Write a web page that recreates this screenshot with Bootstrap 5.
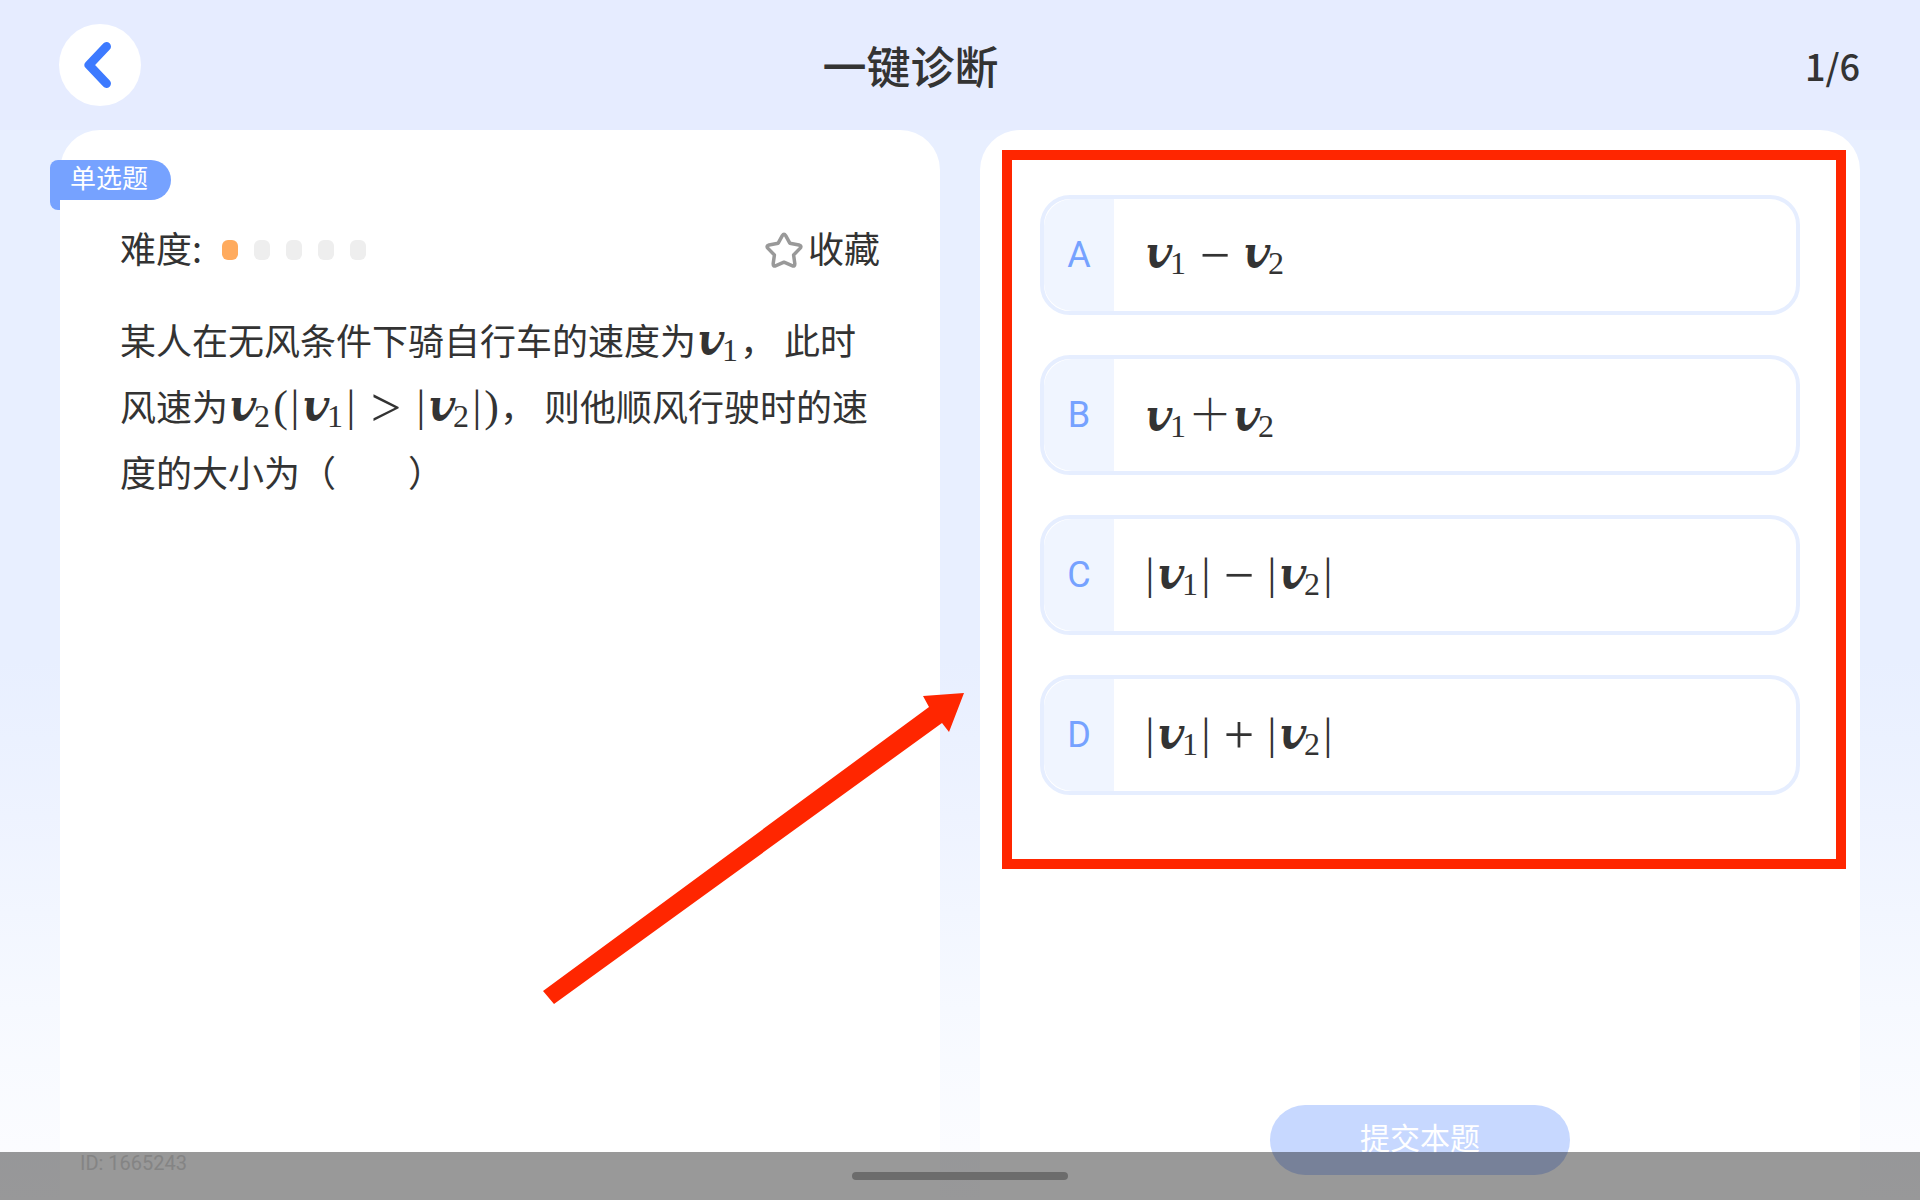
<!DOCTYPE html>
<html lang="zh-CN">
<head>
<meta charset="utf-8">
<meta name="viewport" content="width=device-width, initial-scale=1">
<title>一键诊断</title>
<link rel="stylesheet" href="https://cdn.jsdelivr.net/npm/bootstrap@5.3.0/dist/css/bootstrap.min.css">
<style>
  body { font-family: "Noto Sans CJK SC", sans-serif; color: #333; background: linear-gradient(#e8efff 55%, #eef3ff 68%, #f6f9ff 84%, #fdfdff 100%); }
  .top-bar { height: 130px; padding: 0 60px 0 59px; background: #e6ecff; }
  .back-btn { width: 82px; height: 82px; background: #fff; }
  .page-title { font-size: 44px; line-height: 64px; font-weight: 500; }
  .page-count { width: 180px; font-size: 36px; line-height: 64px; font-weight: 500; }
  .panes { padding: 0 60px; gap: 40px; }
  .pane { flex: 1 1 0; min-width: 0; border-radius: 40px 40px 0 0; background: #fff; }
  .question-pane { padding: 84px 60px 25px; }
  .kind-tag { left: -10px; top: 30px; width: 121px; height: 40px; padding-left: 20px; font-size: 26px; line-height: 34px; color: #fff; background: #76a2ff; border-radius: 8px 20px 20px 0; }
  .kind-tag::after { content: ""; position: absolute; left: 0; top: 40px; width: 10px; height: 10px; background: #76a2ff; border-radius: 0 0 0 8px; }
  .body-text { font-size: 36px; line-height: 66px; }
  .level-dots { gap: 16px; margin-left: 20px; padding-top: 6px; }
  .level-dots i { width: 16px; height: 20px; border-radius: 6px; background: #eee; }
  .level-dots i.on { background: #ffab5e; }
  .fav-btn { color: inherit; gap: 5px; }
  .fav-btn svg { margin-top: 6px; }
  .question { margin-top: 26px; }
  .question-id { margin-left: -40px; font: 20px/24px Roboto, sans-serif; color: #ddd; }
  .answer-pane { padding: 65px 60px 25px; }
  .choices { gap: 40px; }
  .choice { height: 120px; border: 4px solid #e6eeff; border-radius: 30px; overflow: hidden; cursor: pointer; }
  .choice-key { width: 70px; margin-right: 30px; background: #f0f5ff; color: #76a2ff; font: 36px/40px Roboto, sans-serif; border-radius: 28px 0 0 28px; }
  .highlight-box { inset: -45px -46px -74px -38px; border: 10px solid #ff2600; pointer-events: none; }
  .submit-btn { width: 300px; height: 70px; padding: 0 0 8px; font-size: 30px; line-height: 40px; color: #fff; background: #c7d8ff; }
  .submit-btn:hover { color: #fff; background: #b6ccff; }

  /* formulas: one cell per symbol */
  .fm { display: inline-flex; align-items: baseline; font: 44px/56px "Liberation Serif", serif; white-space: nowrap; }
  .fm > * { text-align: center; }
  .fm b { width: 26px; font-family: "DejaVu Math TeX Gyre", "Liberation Serif", serif; font-weight: 400; line-height: 56px; text-align: left; }
  .fm sub { width: 18px; font-size: 32px; line-height: 32px; bottom: 0; top: 6px; text-align: left; }
  .fm .bar { width: 12px; }
  .fm .par { width: 17px; }
  .fm .rel, .fm .op { align-self: center; font-size: 54px; line-height: 56px; }
  .fm .rel { width: 58px; }
  .fm .op { width: 54px; }
  .fm .wide { width: 44px; font-family: "Noto Sans CJK SC", sans-serif; font-weight: 300; line-height: 56px; }

  .arrow { left: 543px; top: 693px; width: 421px; height: 312px; pointer-events: none; }
  .nav-strip { height: 48px; background: rgba(0, 0, 0, .4); }
  .nav-strip span { width: 216px; height: 8px; background: #6c6c6c; }
</style>
<script src="https://cdn.jsdelivr.net/npm/bootstrap@5.3.0/dist/js/bootstrap.bundle.min.js"></script>
</head>
<body>
<div class="position-relative d-flex flex-column min-vh-100">
  <header class="top-bar d-flex align-items-center">
    <button type="button" class="btn back-btn rounded-circle border-0 p-0 d-flex align-items-center justify-content-center" aria-label="返回">
      <svg width="82" height="82" viewBox="0 0 82 82" fill="none" stroke="#3d7aff" stroke-width="9" stroke-linecap="round" stroke-linejoin="round"><path d="M47.500 22.500L30 41L47.500 59.500"/></svg>
    </button>
    <h1 class="page-title flex-grow-1 text-center mb-0">一键诊断</h1>
    <div class="page-count text-end">1/6</div>
  </header>

  <main class="panes d-flex flex-grow-1">
    <section class="pane question-pane position-relative d-flex flex-column">
      <div class="kind-tag position-absolute">单选题</div>
      <div class="body-text d-flex align-items-center">
        <span>难度:</span>
        <span class="level-dots d-flex"><i class="on"></i><i></i><i></i><i></i><i></i></span>
        <button type="button" class="btn fav-btn body-text border-0 p-0 ms-auto d-flex align-items-center">
          <svg width="38" height="36" viewBox="0 0 38 36" fill="none" stroke="#999" stroke-width="3.500" stroke-linejoin="round"><path d="M17.300 3.600Q19 .8 20.700 3.600L24.800 11.200L34 13Q37.200 13.900 35 16.400L28.600 23L29.800 31.500Q30 35 27 33.700L19 30.200L11 33.700Q8 35 8.200 31.500L9.400 23L3 16.400Q.8 13.900 4 13L13.200 11.200Z"/></svg>
          <span>收藏</span>
        </button>
      </div>
      <p class="question body-text mb-auto">某人在无风条件下骑自行车的速度为<span class="fm"><b>𝒗</b><sub>1</sub></span>， 此时风速为<span class="fm"><b>𝒗</b><sub>2</sub><span class="par">(</span><span class="bar">|</span><b>𝒗</b><sub>1</sub><span class="bar">|</span><span class="rel">&gt;</span><span class="bar">|</span><b>𝒗</b><sub>2</sub><span class="bar">|</span><span class="par">)</span></span>， 则他顺风行驶时的速度的大小为（　　）</p>
      <div class="question-id">ID: 1665243</div>
    </section>

    <section class="pane answer-pane d-flex flex-column">
      <div class="choices position-relative d-flex flex-column">
        <label class="choice d-flex"><input class="visually-hidden" type="radio" name="answer" value="A">
          <span class="choice-key d-flex align-items-center justify-content-center">A</span>
          <span class="fm align-self-center"><b>𝒗</b><sub>1</sub><span class="op">−</span><b>𝒗</b><sub>2</sub></span></label>
        <label class="choice d-flex"><input class="visually-hidden" type="radio" name="answer" value="B">
          <span class="choice-key d-flex align-items-center justify-content-center">B</span>
          <span class="fm align-self-center"><b>𝒗</b><sub>1</sub><span class="wide">＋</span><b>𝒗</b><sub>2</sub></span></label>
        <label class="choice d-flex"><input class="visually-hidden" type="radio" name="answer" value="C">
          <span class="choice-key d-flex align-items-center justify-content-center">C</span>
          <span class="fm align-self-center"><span class="bar">|</span><b>𝒗</b><sub>1</sub><span class="bar">|</span><span class="op">−</span><span class="bar">|</span><b>𝒗</b><sub>2</sub><span class="bar">|</span></span></label>
        <label class="choice d-flex"><input class="visually-hidden" type="radio" name="answer" value="D">
          <span class="choice-key d-flex align-items-center justify-content-center">D</span>
          <span class="fm align-self-center"><span class="bar">|</span><b>𝒗</b><sub>1</sub><span class="bar">|</span><span class="op">+</span><span class="bar">|</span><b>𝒗</b><sub>2</sub><span class="bar">|</span></span></label>
        <div class="highlight-box position-absolute"></div>
      </div>
      <button type="button" class="btn submit-btn rounded-pill border-0 mt-auto mx-auto">提交本题</button>
    </section>
  </main>

  <svg class="arrow position-absolute" viewBox="0 0 421 312" aria-hidden="true"><path fill="#ff2600" d="M0 298L386 14L380 3L421 0L406 39L399 30L11 311Z"/></svg>
</div>
<div class="nav-strip fixed-bottom d-flex align-items-center justify-content-center"><span class="rounded-pill"></span></div>
</body>
</html>
